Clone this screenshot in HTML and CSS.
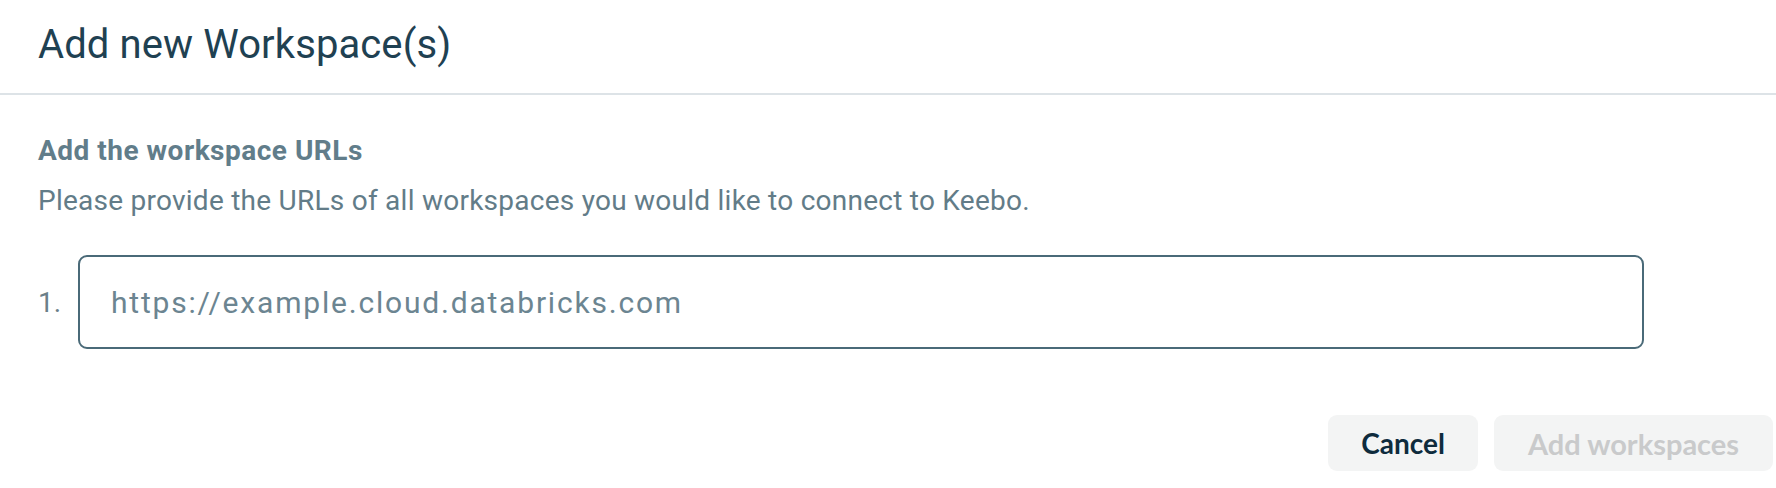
FILE: index.html
```html
<!DOCTYPE html>
<html lang="en">
<head>
<meta charset="utf-8">
<title>Add new Workspace(s)</title>
<link rel="stylesheet" href="styles.css">
</head>
<body>
<div class="dialog">
  <header class="dialog-header">
    <h1 class="dialog-title">Add new Workspace(s)</h1>
  </header>
  <section class="dialog-body">
    <h2 class="section-title">Add the workspace URLs</h2>
    <p class="section-text">Please provide the URLs of all workspaces you would like to connect to Keebo.</p>
    <div class="url-row">
      <span class="url-index">1.</span>
      <input class="url-input" type="text" placeholder="https://example.cloud.databricks.com">
    </div>
  </section>
  <footer class="dialog-footer">
    <button class="btn btn-cancel" type="button">Cancel</button>
    <button class="btn btn-primary" type="button" disabled>Add workspaces</button>
  </footer>
</div>
</body>
</html>
```
FILE: styles.css
```css
html, body {
  margin: 0;
  padding: 0;
  background: #ffffff;
}
body {
  font-family: Roboto, "Noto Sans", "Liberation Sans", sans-serif;
  width: 1776px;
  height: 488px;
  overflow: hidden;
}
.dialog {
  display: flex;
  flex-direction: column;
  height: 488px;
}
.dialog-header {
  height: 95px;
  box-sizing: border-box;
  padding: 0 38px 4px 38px;
  display: flex;
  align-items: center;
  border-bottom: 2px solid #dde3e7;
}
.dialog-title {
  margin: 0;
  font-size: 40px;
  font-weight: 400;
  color: #1f4152;
  line-height: 48px;
  letter-spacing: 0.1px;
}
.dialog-body {
  padding: 38px 38px 0 38px;
  display: flex;
  flex-direction: column;
}
.section-title {
  margin: 0;
  font-size: 28px;
  font-weight: 700;
  color: #617d8a;
  line-height: 36px;
  letter-spacing: 0.5px;
}
.section-text {
  margin: 14px 0 0 0;
  font-size: 28px;
  font-weight: 400;
  color: #627c88;
  line-height: 36px;
  letter-spacing: 0.25px;
}
.url-row {
  display: flex;
  align-items: center;
  margin-top: 36px;
  width: 1606px;
}
.url-index {
  width: 40px;
  flex: none;
  font-size: 28px;
  color: #6b7f89;
}
.url-input {
  flex: 1;
  height: 94px;
  box-sizing: border-box;
  border: 2px solid #4a6a78;
  border-radius: 9px;
  padding: 0 31px;
  font-family: inherit;
  font-size: 30px;
  letter-spacing: 1.8px;
  color: #627c88;
  outline: none;
  background: #fff;
}
.url-input::placeholder {
  color: #6c8591;
}
.dialog-footer {
  display: flex;
  justify-content: flex-end;
  gap: 16px;
  padding: 66px 3px 0 0;
}
.btn {
  height: 56px;
  border: none;
  border-radius: 9px;
  background: #f3f4f4;
  font-family: Lato, "Open Sans", sans-serif;
  font-size: 28px;
  font-weight: 700;
  padding: 0 20px;
}
.btn-cancel {
  width: 150px;
  color: #0e2b3d;
}
.btn-primary {
  width: 279px;
  color: #c9cacb;
  font-size: 29px;
}
```
